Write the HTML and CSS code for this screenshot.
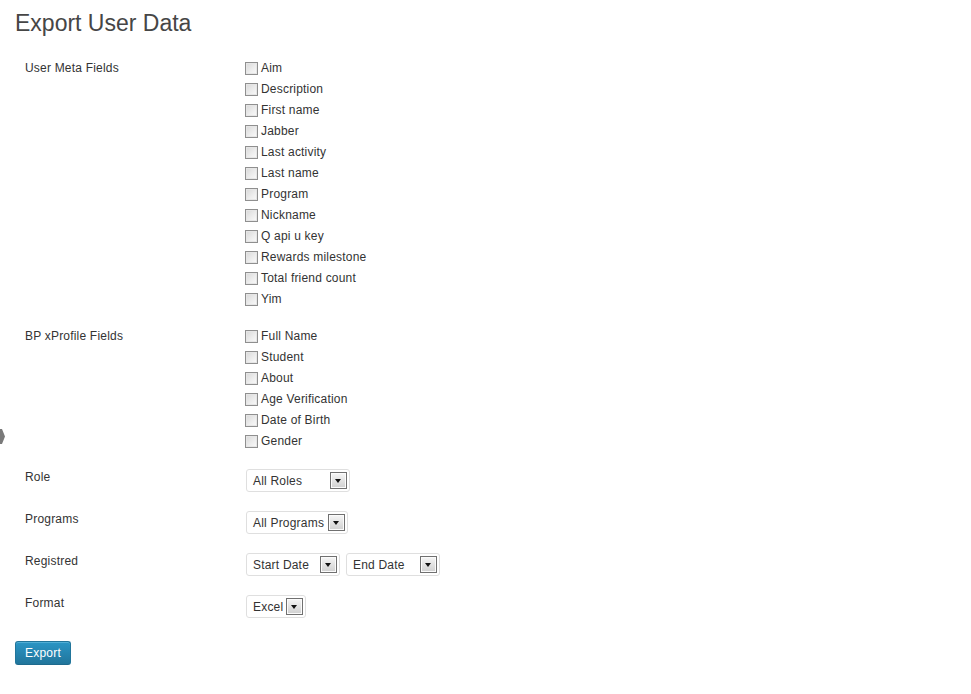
FILE: index.html
```html
<!DOCTYPE html>
<html>
<head>
<meta charset="utf-8">
<title>Export User Data</title>
<link rel="stylesheet" href="styles.css">
</head>
<body>
<div class="edge-tab"></div>
<div class="wrap">
  <h2 class="title">Export User Data</h2>
  <form class="form">
    <div class="row row-checks">
      <div class="label">User Meta Fields</div>
      <div class="field">
        <label class="check"><span class="box"></span>Aim</label>
        <label class="check"><span class="box"></span>Description</label>
        <label class="check"><span class="box"></span>First name</label>
        <label class="check"><span class="box"></span>Jabber</label>
        <label class="check"><span class="box"></span>Last activity</label>
        <label class="check"><span class="box"></span>Last name</label>
        <label class="check"><span class="box"></span>Program</label>
        <label class="check"><span class="box"></span>Nickname</label>
        <label class="check"><span class="box"></span>Q api u key</label>
        <label class="check"><span class="box"></span>Rewards milestone</label>
        <label class="check"><span class="box"></span>Total friend count</label>
        <label class="check"><span class="box"></span>Yim</label>
      </div>
    </div>
    <div class="row row-checks">
      <div class="label">BP xProfile Fields</div>
      <div class="field">
        <label class="check"><span class="box"></span>Full Name</label>
        <label class="check"><span class="box"></span>Student</label>
        <label class="check"><span class="box"></span>About</label>
        <label class="check"><span class="box"></span>Age Verification</label>
        <label class="check"><span class="box"></span>Date of Birth</label>
        <label class="check"><span class="box"></span>Gender</label>
      </div>
    </div>
    <div class="row row-select">
      <div class="label">Role</div>
      <div class="field">
        <div class="select w-role"><span class="sel-text">All Roles</span><span class="arrow"></span></div>
      </div>
    </div>
    <div class="row row-select">
      <div class="label">Programs</div>
      <div class="field">
        <div class="select w-programs"><span class="sel-text">All Programs</span><span class="arrow"></span></div>
      </div>
    </div>
    <div class="row row-select">
      <div class="label">Registred</div>
      <div class="field">
        <div class="select w-date"><span class="sel-text">Start Date</span><span class="arrow"></span></div>
        <div class="select w-date"><span class="sel-text">End Date</span><span class="arrow"></span></div>
      </div>
    </div>
    <div class="row row-select">
      <div class="label">Format</div>
      <div class="field">
        <div class="select w-format"><span class="sel-text">Excel</span><span class="arrow"></span></div>
      </div>
    </div>
    <div class="actions">
      <button type="button" class="btn-primary">Export</button>
    </div>
  </form>
</div>
</body>
</html>
```

FILE: styles.css
```css
html, body {
  margin: 0;
  padding: 0;
  background: #fff;
}
body {
  font-family: "Liberation Sans", Arial, sans-serif;
  font-size: 12px;
  letter-spacing: 0.2px;
  color: #333;
  position: relative;
  min-height: 694px;
}
.edge-tab {
  position: absolute;
  left: 0;
  top: 429px;
  width: 5px;
  height: 15px;
  background: #7a7a7a;
  clip-path: polygon(0 0, 40% 0, 100% 50%, 40% 100%, 0 100%);
}
.wrap {
  padding-left: 15px;
}
.title {
  margin: 0;
  padding-top: 9px;
  font-family: "Liberation Sans", Arial, sans-serif;
  font-weight: normal;
  font-size: 23px;
  line-height: 29px;
  letter-spacing: 0;
  color: #464646;
}
.form {
  margin-top: 12px;
}
.row {
  display: flex;
  align-items: flex-start;
}
.label {
  width: 230px;
  padding-left: 10px;
  box-sizing: border-box;
  line-height: 21px;
  padding-top: 8px;
  flex-shrink: 0;
}
.row-checks .field {
  padding: 8px 0;
  display: flex;
  flex-direction: column;
}
.check {
  display: flex;
  align-items: center;
  height: 21px;
  line-height: 21px;
}
.box {
  width: 11px;
  height: 11px;
  border: 1px solid #8f8f8f;
  background: linear-gradient(135deg, #d8d8d8 0%, #eeeeee 60%, #fafafa 100%);
  box-shadow: inset 0 0 0 1px #e6e6e6;
  margin-right: 3px;
  flex-shrink: 0;
}
.row-select .field {
  padding: 9px 0 10px 1px;
  display: flex;
  gap: 6px;
}
.row-select .label {
  padding-top: 7px;
}
.select {
  height: 23px;
  box-sizing: border-box;
  border: 1px solid #dfdfdf;
  border-radius: 3px;
  background: #fff;
  display: flex;
  align-items: center;
  justify-content: space-between;
  padding: 0 2px 0 6px;
}
.sel-text {
  color: #333;
  white-space: nowrap;
}
.w-role { width: 104px; }
.w-programs { width: 102px; }
.w-date { width: 94px; }
.w-format { width: 60px; }
.arrow {
  width: 17px;
  height: 17px;
  box-sizing: border-box;
  border: 1px solid #707070;
  background: linear-gradient(#f6f6f6, #d0d0d0);
  box-shadow: inset 0 0 0 1px #fbfbfb;
  position: relative;
  flex-shrink: 0;
}
.arrow::after {
  content: "";
  position: absolute;
  left: 4px;
  top: 6px;
  border-left: 3.5px solid transparent;
  border-right: 3.5px solid transparent;
  border-top: 4px solid #111;
}
.actions {
  padding-top: 13px;
}
.btn-primary {
  font-family: "Liberation Sans", Arial, sans-serif;
  font-size: 12px;
  letter-spacing: 0.2px;
  color: #fff;
  width: 56px;
  height: 24px;
  padding: 0;
  border: 1px solid #21759b;
  border-bottom-color: #1e6a8d;
  border-radius: 3px;
  background: linear-gradient(#2a95c5, #21759b);
  box-shadow: inset 0 1px 0 rgba(120, 200, 230, 0.5);
  cursor: pointer;
}
```
